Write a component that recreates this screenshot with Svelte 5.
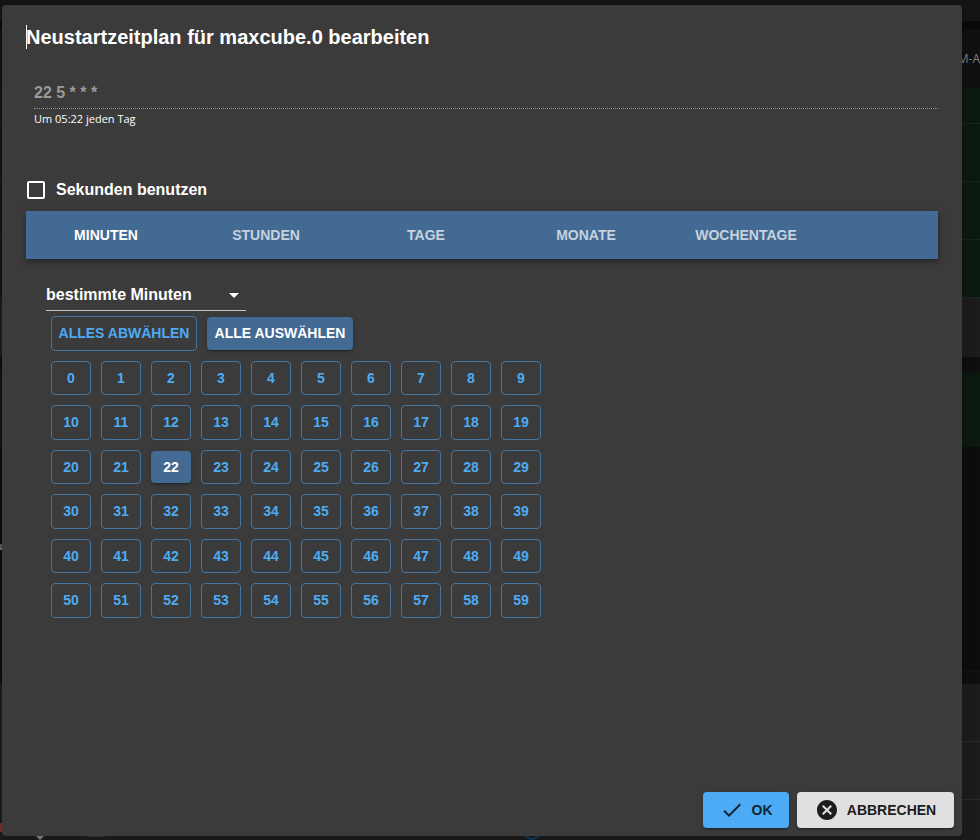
<script>
  const tabs = ['Minuten', 'Stunden', 'Tage', 'Monate', 'Wochentage'];
  const modes = ['jede Minute', 'alle N Minuten', 'bestimmte Minuten'];
  const minutes = Array.from({ length: 60 }, (_, i) => i);
  const rows = [
    ['bar', 21], ['gap', 8], ['head', 58],
    ['alive', 37], ['alive', 58], ['alive', 58], ['alive', 58],
    ['row', 59], ['dim', 16], ['alive last', 74], ['dark', 221], ['dim', 16],
    ['row line', 58], ['row line', 58], ['row', 42]
  ];

  let activeTab = $state('Minuten');
  let mode = $state('bestimmte Minuten');
  let useSeconds = $state(false);
  let selected = $state([22]);
  let cron = $derived(`${selected.length === 60 ? '*' : selected.join(',') || '*'} 5 * * *`);

  function toggle(n) {
    selected = selected.includes(n)
      ? selected.filter((m) => m !== n)
      : [...selected, n].sort((a, b) => a - b);
  }
</script>

<div class="page">
  <div class="backdrop" aria-hidden="true">
    {#each rows as [kind, height]}
      <div class={kind} style="height: {height}px">
        {#if kind === 'head'}<span>M-A</span>{/if}
      </div>
    {/each}
    <i class="edge-mark"></i>
    <i class="red-mark"></i>
    <svg class="arrow-mark" width="8" height="4" viewBox="0 0 8 4"><path d="M0 0h8L4 4z" fill="#888" /></svg>
    <i class="line-mark"></i>
    <i class="ring-mark"></i>
  </div>

  <div class="dialog" role="dialog" aria-labelledby="title">
    <h2 id="title">Neustartzeitplan für maxcube.0 bearbeiten</h2>

    <div class="content">
      <div class="field">
        <input id="cron" type="text" value={cron} disabled aria-describedby="help" aria-label="Cron" />
        <p id="help">Um 05:22 jeden Tag</p>
      </div>

      <label class="seconds">
        <input type="checkbox" bind:checked={useSeconds} />
        <span>Sekunden benutzen</span>
      </label>

      <div class="tabs" role="tablist">
        {#each tabs as tab}
          <button role="tab" aria-selected={activeTab === tab} class:active={activeTab === tab} onclick={() => (activeTab = tab)}>{tab}</button>
        {/each}
      </div>

      <div class="panel">
        <div class="select">
          <select bind:value={mode} aria-label="Modus">
            {#each modes as m}<option>{m}</option>{/each}
          </select>
          <svg width="24" height="24" viewBox="0 0 24 24"><path d="M7 10l5 5 5-5z" fill="#fff" /></svg>
        </div>

        <div class="bulk">
          <button class="btn outlined" onclick={() => (selected = [])}>Alles abwählen</button>
          <button class="btn filled" onclick={() => (selected = [...minutes])}>Alle auswählen</button>
        </div>

        <div class="minutes">
          {#each minutes as n}
            <button class="btn {selected.includes(n) ? 'filled' : 'outlined'}" onclick={() => toggle(n)}>{n}</button>
          {/each}
        </div>
      </div>
    </div>

    <div class="actions">
      <button class="action ok">
        <svg width="24" height="24" viewBox="0 0 24 24"><path d="M9 16.17L4.83 12l-1.42 1.41L9 19 21 7l-1.41-1.41z" fill="currentColor" /></svg>
        OK
      </button>
      <button class="action cancel">
        <svg width="24" height="24" viewBox="0 0 24 24"><path d="M12 2C6.47 2 2 6.47 2 12s4.47 10 10 10 10-4.47 10-10S17.53 2 12 2zm5 13.59L15.59 17 12 13.41 8.41 17 7 15.59 10.59 12 7 8.41 8.41 7 12 10.59 15.59 7 17 8.41 13.41 12z" fill="currentColor" /></svg>
        Abbrechen
      </button>
    </div>
  </div>
</div>

<style>
  :global(body) {
    margin: 0;
    background: #121212;
  }

  .page {
    position: relative;
    display: flex;
    min-height: 100vh;
    box-sizing: border-box;
    padding: 5px 18px 4px 2px;
    overflow: hidden;
    font-family: 'Liberation Sans', Arial, sans-serif;
    font-weight: 700;
    color: #fff;
  }

  button,
  input,
  select {
    font: inherit;
    color: inherit;
  }

  button {
    border: 0;
    margin: 0;
    text-transform: uppercase;
    font-size: 14px;
    cursor: pointer;
  }

  /* page behind the dialog */
  .backdrop {
    position: absolute;
    inset: 0;
    background: #121212;
  }
  .backdrop div {
    box-sizing: border-box;
  }
  .bar { background: #141414; }
  .gap { background: #090909; }
  .head {
    display: flex;
    align-items: center;
    justify-content: flex-end;
    background: #101010;
    color: #808080;
    font: 400 12px 'Open Sans', sans-serif;
  }
  .alive {
    background: #0c190e;
    border-bottom: 1px solid #1c241c;
  }
  .last { border-bottom: 0; }
  .row { background: #1c1c1c; }
  .line { border-bottom: 1px solid #2a2a2a; }
  .dim { background: #0f0f0f; }
  .dark {
    background: #0d0d0d;
    border-bottom: 1px solid #070707;
  }
  .backdrop i,
  .arrow-mark {
    position: absolute;
  }
  .edge-mark {
    left: 0;
    top: 544px;
    width: 2px;
    height: 4px;
    border-bottom: 2px solid #777;
    background: #555;
  }
  .red-mark {
    left: 0;
    bottom: 8px;
    width: 4px;
    height: 9px;
    background: #8c2626;
  }
  .arrow-mark { left: 36px; bottom: 0; }
  .line-mark {
    left: 87px;
    bottom: 3px;
    width: 18px;
    height: 1px;
    background: #3a3a3a;
  }
  .ring-mark {
    left: 522px;
    bottom: 0;
    box-sizing: border-box;
    width: 20px;
    height: 20px;
    border: 2px solid #0c3c68;
    border-radius: 50%;
  }

  .dialog {
    position: relative;
    flex: 1;
    display: flex;
    flex-direction: column;
    min-width: 0;
    background: #3b3b3b;
    border-radius: 4px;
    box-shadow: 0 4px 16px rgba(0, 0, 0, 0.2);
  }

  h2 {
    position: relative;
    margin: 0;
    padding: 16px 24px;
    font-size: 20px;
    line-height: 32px;
  }
  h2::before {
    content: '';
    position: absolute;
    left: 24px;
    top: 20px;
    width: 1px;
    height: 24px;
    background: #fff;
  }

  .content {
    flex: 1;
    padding: 8px 24px;
  }

  .field {
    margin-left: 8px;
    height: 92px;
  }
  .field input {
    display: block;
    box-sizing: border-box;
    width: 100%;
    height: 32px;
    padding: 0;
    border: 0;
    border-bottom: 1px dotted #989898;
    border-radius: 0;
    background: none;
    font-size: 16px;
    color: #9a9a9a;
  }
  .field p {
    margin: 2px 0 0;
    font: 400 11px/16px 'Open Sans', 'Noto Sans', sans-serif;
  }

  .seconds {
    display: flex;
    align-items: center;
    gap: 11px;
    width: max-content;
    height: 42px;
    padding-left: 1px;
    font-size: 16px;
  }
  .seconds input {
    appearance: none;
    box-sizing: border-box;
    width: 18px;
    height: 18px;
    margin: 0;
    border: 2px solid #fff;
    border-radius: 2px;
  }
  .seconds input:checked { background: #4dabf5; }

  .tabs {
    display: flex;
    height: 48px;
    background: #436a93;
    box-shadow:
      0 2px 4px -1px rgba(0, 0, 0, 0.2),
      0 4px 5px rgba(0, 0, 0, 0.14),
      0 1px 10px rgba(0, 0, 0, 0.12);
  }
  .tabs button {
    width: 160px;
    padding: 0 12px;
    background: none;
    color: #c7d2df;
  }
  .tabs .active { color: #fff; }

  .panel { padding: 20px; }

  .select {
    display: flex;
    align-items: center;
    position: relative;
    width: 200px;
  }
  .select select {
    appearance: none;
    width: 100%;
    height: 32px;
    padding: 0 24px 0 0;
    border: 0;
    border-bottom: 1px solid #c4c4c4;
    border-radius: 0;
    background: none;
    font-size: 16px;
  }
  .select option { background: #3b3b3b; }
  .select svg {
    position: absolute;
    right: 0;
    pointer-events: none;
  }

  .bulk {
    display: flex;
    align-items: center;
    gap: 10px;
    padding: 5px;
  }
  .btn {
    padding: 4px;
    border-radius: 4px;
    line-height: 1.75;
  }
  .outlined {
    border: 1px solid #44769f;
    background: none;
    color: #4dabf5;
  }
  .filled {
    background: #436a93;
    color: #fff;
    box-shadow:
      0 3px 1px -2px rgba(0, 0, 0, 0.2),
      0 2px 2px rgba(0, 0, 0, 0.14),
      0 1px 5px rgba(0, 0, 0, 0.12);
  }
  .bulk .btn { min-width: 146px; }

  .minutes {
    display: grid;
    grid-template-columns: repeat(10, 40px);
    align-items: center;
    gap: 10px;
    padding: 5px;
  }

  .actions {
    display: flex;
    justify-content: flex-end;
    gap: 8px;
    padding: 8px;
  }
  .action {
    display: flex;
    align-items: center;
    justify-content: center;
    gap: 8px;
    height: 36px;
    padding: 0 16px;
    border-radius: 4px;
    background: #e0e0e0;
    color: #1c1c1c;
    box-shadow:
      0 3px 1px -2px rgba(0, 0, 0, 0.2),
      0 2px 2px rgba(0, 0, 0, 0.14),
      0 1px 5px rgba(0, 0, 0, 0.12);
  }
  .ok {
    min-width: 86px;
    background: #4dabf5;
    color: #102433;
  }
  .cancel { min-width: 157px; }
</style>
